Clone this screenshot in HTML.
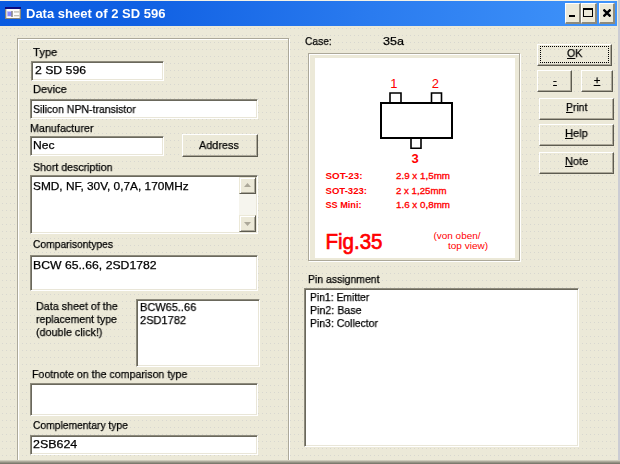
<!DOCTYPE html>
<html>
<head>
<meta charset="utf-8">
<title>Data sheet of 2 SD 596</title>
<style>
html,body{margin:0;padding:0;}
body{width:620px;height:464px;overflow:hidden;position:relative;background:#ece9d8;
  font-family:"Liberation Sans",sans-serif;font-size:12px;color:#000;}
#win{position:absolute;left:0;top:0;width:620px;height:464px;overflow:hidden;background-color:#ece9d8;
  background-image:linear-gradient(#ece9d8 6px,rgba(236,233,216,0) 6px),linear-gradient(90deg,#d8d7d0 1px,rgba(216,215,208,0) 1px);
  background-size:4px 7px,4px 7px;background-position:0 1px,2px 0;}
.abs{position:absolute;}
.t{position:absolute;white-space:nowrap;line-height:14px;font-size:11.5px;transform-origin:0 0;will-change:transform;-webkit-text-stroke:0.25px #000;}
/* title bar */
#title{position:absolute;left:0;top:1px;width:617px;height:25px;
  background:linear-gradient(90deg,#0a5be0 0%,#1060e3 22%,#2a7bef 60%,#4094fa 100%);}
#ttext{position:absolute;left:26px;top:5px;font-size:13px;font-weight:bold;color:#fff;line-height:16px;white-space:nowrap;transform-origin:0 0;will-change:transform;}
.cap{position:absolute;top:2px;height:21px;background:#ece9d8;box-sizing:border-box;
  border-top:1px solid #fff;border-left:1px solid #fff;border-right:2px solid #8d8a7c;border-bottom:2px solid #8d8a7c;}
/* group box (etched) */
.grp{position:absolute;box-sizing:border-box;border:1px solid #aca899;box-shadow:inset 1px 1px 0 #fff,1px 1px 0 #fff;}
/* sunken field */
.fld{position:absolute;box-sizing:border-box;background:#fff;
  border-top:1px solid #8d8a7c;border-left:1px solid #8d8a7c;border-right:1px solid #fff;border-bottom:1px solid #fff;
  box-shadow:inset 1px 1px 0 #6a685c, inset -1px -1px 0 #e9e6d8;}
/* button */
.btn{position:absolute;box-sizing:border-box;
  border-top:1px solid #fff;border-left:1px solid #fff;border-right:1px solid #5d5b50;border-bottom:1px solid #5d5b50;
  box-shadow:inset -1px -1px 0 #aca899;}
.sbtn{position:absolute;box-sizing:border-box;background:#ece9d8;border-top:1px solid #ece9d8;border-left:1px solid #ece9d8;border-right:1px solid #5d5b50;border-bottom:1px solid #5d5b50;box-shadow:inset 1px 1px 0 #fff,inset -1px -1px 0 #aca899;}
.bl{position:absolute;white-space:nowrap;line-height:14px;font-size:11.5px;transform:translateX(-50%);will-change:transform;-webkit-text-stroke:0.25px #000;}
u{text-decoration:underline;}
</style>
</head>
<body>
<div id="win">
  <div class="abs" style="left:0;top:0;width:620px;height:1px;background:#f4f2e6"></div>
  <div id="title">
    <svg class="abs" style="left:5px;top:6px" width="16" height="12" viewBox="0 0 16 12">
      <rect x="0" y="0" width="16" height="12" fill="#8a877a"/>
      <rect x="0" y="0" width="16" height="2" fill="#0a0a80"/>
      <rect x="1" y="2" width="14" height="9" fill="#fcfcfa"/>
      <rect x="1" y="2" width="1" height="9" fill="#d8d6cc"/>
      <rect x="14" y="2" width="1" height="9" fill="#d8d6cc"/>
      <path d="M2 4.5 H6.4 V9.3 H2 V8.6 H2.8 V7.6 H2 V6.4 H2.8 V5.4 H2 Z" fill="#8a8aff"/>
      <rect x="6.5" y="4" width="1" height="6" fill="#444"/>
      <rect x="9" y="4.2" width="5.4" height="1.4" fill="#c2c0b8"/>
      <rect x="9" y="8" width="5.4" height="1.3" fill="#c2c0b8"/>
    </svg>
    <div id="ttext">Data sheet of 2 SD 596</div>
    <div class="cap" style="left:565px;width:16px;"><div class="abs" style="left:3px;top:11px;width:6px;height:2px;background:#000"></div></div>
    <div class="cap" style="left:581px;width:16px;"><div class="abs" style="left:1px;top:4px;width:10px;height:9px;box-sizing:border-box;border:1px solid #000;border-top-width:2px"></div></div>
    <div class="cap" style="left:599px;width:16px;">
      <svg class="abs" style="left:3px;top:5px" width="8" height="8" viewBox="0 0 8 8"><path d="M0.5 0.5 L7.5 7.5 M7.5 0.5 L0.5 7.5" stroke="#000" stroke-width="2.3"/></svg>
    </div>
  </div>
  <!-- window frame right / bottom -->
  <div class="abs" style="left:618px;top:0;width:2px;height:464px;background:#cbccd4"></div>
  <div class="abs" style="left:0;top:460px;width:620px;height:4px;z-index:5;background:linear-gradient(#dedbcb,#a5a294 45%,#6f6d60)"></div>

  <!-- left group -->
  <div class="grp" style="left:17px;top:38px;width:272px;height:440px;"></div>

  <div class="fld" style="left:31px;top:61px;width:133px;height:20px;"></div>
  <div class="fld" style="left:30px;top:99px;width:228px;height:20px;"></div>
  <div class="fld" style="left:30px;top:136px;width:134px;height:20px;"></div>
  <div class="btn" style="left:182px;top:134px;width:76px;height:23px;"></div>
  <div class="fld" style="left:30px;top:175px;width:228px;height:59px;">
    <div class="abs" id="sb" style="left:208px;top:1px;width:17px;height:55px;background:#f6f5ee;">
      <div class="sbtn" style="left:0;top:0;width:17px;height:17px;"><svg class="abs" style="left:4px;top:5px" width="7" height="4" viewBox="0 0 7 4"><path d="M0 4 L3.5 0 L7 4Z" fill="#aca899"/></svg></div>
      <div class="sbtn" style="left:0;top:38px;width:17px;height:17px;"><svg class="abs" style="left:4px;top:6px" width="7" height="4" viewBox="0 0 7 4"><path d="M0 0 L3.5 4 L7 0Z" fill="#aca899"/></svg></div>
    </div>
  </div>
  <div class="fld" style="left:30px;top:255px;width:228px;height:36px;"></div>
  <div class="fld" style="left:136px;top:299px;width:124px;height:68px;"></div>
  <div class="fld" style="left:30px;top:383px;width:228px;height:33px;"></div>
  <div class="fld" style="left:30px;top:435px;width:228px;height:20px;"></div>

  <!-- right side -->
  <div class="grp" id="pic" style="left:308px;top:53px;width:212px;height:208px;background:#ece9d8"></div>
  <svg class="abs" style="left:315px;top:58px;background:#fff" width="200" height="200" viewBox="0 0 200 200" font-family="Liberation Sans, sans-serif" fill="#ff0000">
    <g fill="none" stroke="#000">
      <path d="M75 44 V35 H86 V44" stroke-width="1.6"/>
      <path d="M116.5 44 V35 H126.5 V44" stroke-width="1.6"/>
      <path d="M96 81 V90.3 H106 V81" stroke-width="1.6"/>
      <rect x="66" y="45" width="71" height="35" stroke-width="2"/>
    </g>
    <text x="78.8" y="30" font-size="13" text-anchor="middle">1</text>
    <text x="120.4" y="30" font-size="13" text-anchor="middle">2</text>
    <text x="100" y="104.5" font-size="13" text-anchor="middle" font-weight="bold">3</text>
    <text x="10.5" y="120.7" font-size="9.3" font-weight="bold" textLength="37" lengthAdjust="spacingAndGlyphs">SOT-23:</text>
    <text x="81" y="120.7" font-size="9.3" stroke="#ff0000" stroke-width="0.3" textLength="54" lengthAdjust="spacingAndGlyphs">2.9 x 1,5mm</text>
    <text x="10.5" y="135.7" font-size="9.3" font-weight="bold" textLength="41.5" lengthAdjust="spacingAndGlyphs">SOT-323:</text>
    <text x="81" y="135.7" font-size="9.3" stroke="#ff0000" stroke-width="0.3" textLength="50.5" lengthAdjust="spacingAndGlyphs">2 x 1,25mm</text>
    <text x="10.5" y="150.4" font-size="9.3" font-weight="bold" textLength="36" lengthAdjust="spacingAndGlyphs">SS Mini:</text>
    <text x="81" y="150.4" font-size="9.3" stroke="#ff0000" stroke-width="0.3" textLength="54" lengthAdjust="spacingAndGlyphs">1.6 x 0,8mm</text>
    <text x="10.5" y="191.3" font-size="21.5" stroke="#ff0000" stroke-width="0.7" textLength="57" lengthAdjust="spacingAndGlyphs">Fig.35</text>
    <text x="118.5" y="180.8" font-size="9" textLength="47" lengthAdjust="spacingAndGlyphs">(von oben/</text>
    <text x="133" y="190.5" font-size="9" textLength="40" lengthAdjust="spacingAndGlyphs">top view)</text>
  </svg>
  <div class="fld" style="left:304px;top:288px;width:275px;height:159px;"></div>

  <div class="btn" style="left:537px;top:44px;width:75px;height:22px;"></div>
  <div class="abs" style="left:540px;top:46px;width:69px;height:17px;box-sizing:border-box;border:1px dotted #000"></div>
  <div class="btn" style="left:537px;top:70px;width:35px;height:22px;"></div>
  <div class="btn" style="left:581px;top:70px;width:32px;height:22px;"></div>
  <div class="btn" style="left:539px;top:98px;width:75px;height:22px;"></div>
  <div class="btn" style="left:539px;top:124px;width:75px;height:22px;"></div>
  <div class="btn" style="left:539px;top:152px;width:75px;height:22px;"></div>
  <div class="bl" style="left:554.5px;top:73px"><u>-</u></div>
  <div class="bl" style="left:597.3px;top:73px"><u>+</u></div>

  <div class="t" style="left:32.5px;top:45px;transform:scaleX(0.972)">Type</div>
  <div class="t" style="left:35.0px;top:63px;transform:scaleX(1.064)">2 SD 596</div>
  <div class="t" style="left:32.5px;top:82px;transform:scaleX(0.960)">Device</div>
  <div class="t" style="left:33.2px;top:102px;transform:scaleX(0.913)">Silicon NPN-transistor</div>
  <div class="t" style="left:30.0px;top:121px;transform:scaleX(0.937)">Manufacturer</div>
  <div class="t" style="left:33.2px;top:138px;transform:scaleX(1.051)">Nec</div>
  <div class="t" style="left:199.2px;top:138px;transform:scaleX(0.943)">Address</div>
  <div class="t" style="left:32.5px;top:160px;transform:scaleX(0.921)">Short description</div>
  <div class="t" style="left:32.8px;top:179px;transform:scaleX(1.031)">SMD, NF, 30V, 0,7A, 170MHz</div>
  <div class="t" style="left:32.5px;top:237px;transform:scaleX(0.894)">Comparisontypes</div>
  <div class="t" style="left:32.8px;top:258px;transform:scaleX(1.062)">BCW 65..66, 2SD1782</div>
  <div class="t" style="left:35.6px;top:299px;transform:scaleX(0.933)">Data sheet of the</div>
  <div class="t" style="left:35.6px;top:312px;transform:scaleX(0.917)">replacement type</div>
  <div class="t" style="left:35.6px;top:325px;transform:scaleX(0.936)">(double click!)</div>
  <div class="t" style="left:139.7px;top:300px;transform:scaleX(0.956)">BCW65..66</div>
  <div class="t" style="left:139.7px;top:313px;transform:scaleX(0.961)">2SD1782</div>
  <div class="t" style="left:32.4px;top:367px;transform:scaleX(0.924)">Footnote on the comparison type</div>
  <div class="t" style="left:32.5px;top:418px;transform:scaleX(0.894)">Complementary type</div>
  <div class="t" style="left:32.8px;top:437px;transform:scaleX(1.080)">2SB624</div>
  <div class="t" style="left:305.0px;top:34px;transform:scaleX(0.890)">Case:</div>
  <div class="t" style="left:383.2px;top:34px;transform:scaleX(1.094)">35a</div>
  <div class="t" style="left:308.2px;top:272px;transform:scaleX(0.909)">Pin assignment</div>
  <div class="t" style="left:309.5px;top:290px;transform:scaleX(0.900)">Pin1: Emitter</div>
  <div class="t" style="left:309.5px;top:303px;transform:scaleX(0.926)">Pin2: Base</div>
  <div class="t" style="left:309.5px;top:316px;transform:scaleX(0.909)">Pin3: Collector</div>
  <div class="t" style="left:566.7px;top:46px;transform:scaleX(0.920)"><u>O</u>K</div>
  <div class="t" style="left:566.0px;top:100px;transform:scaleX(0.905)"><u>P</u>rint</div>
  <div class="t" style="left:565.0px;top:126px;transform:scaleX(0.967)"><u>H</u>elp</div>
  <div class="t" style="left:565.0px;top:154px;transform:scaleX(0.958)"><u>N</u>ote</div>
</div>
</body>
</html>
